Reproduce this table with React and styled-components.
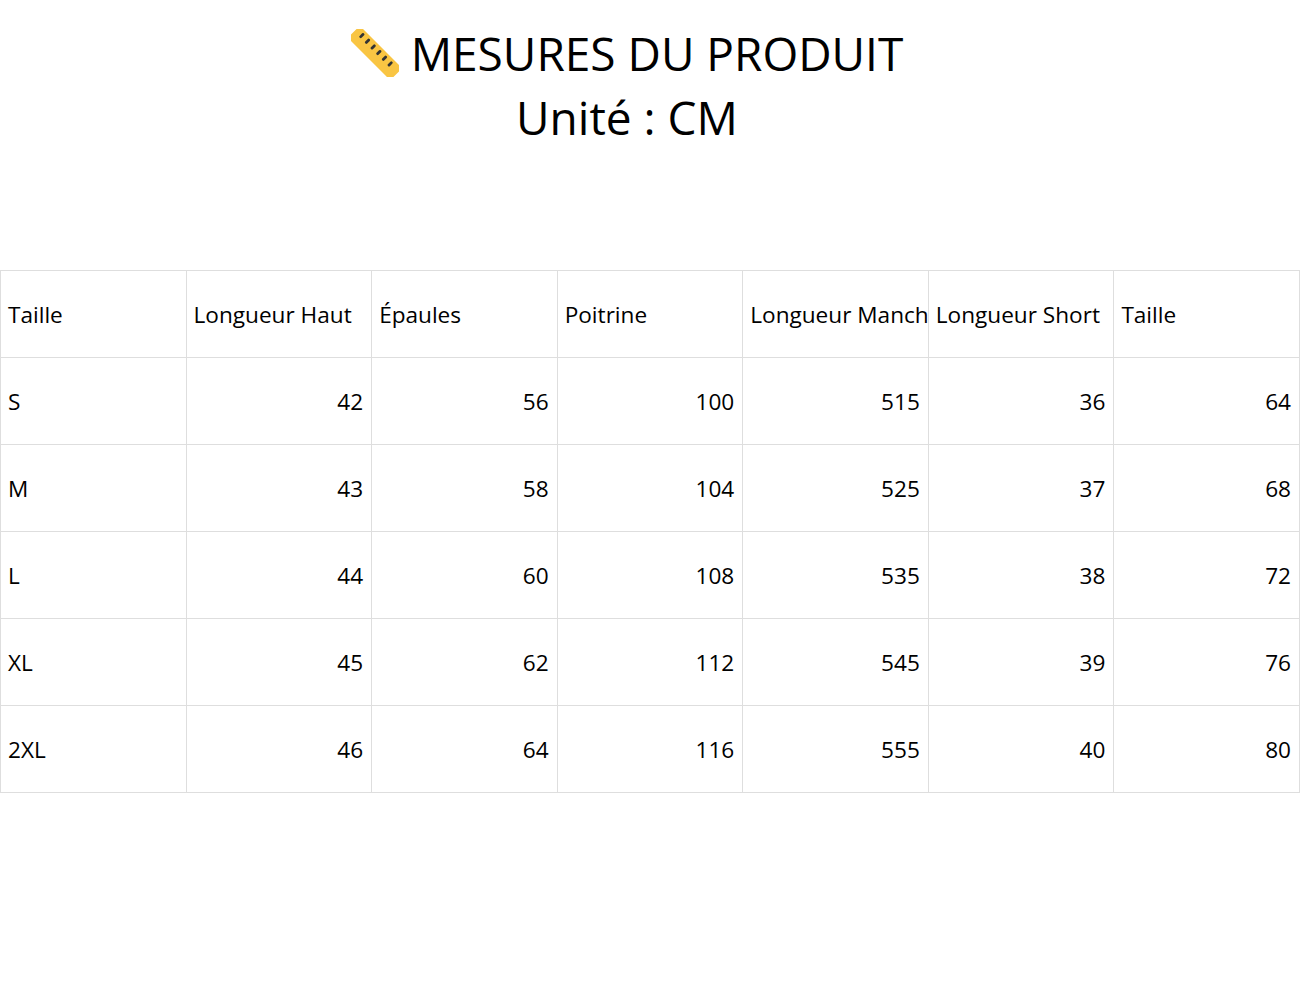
import styled, { createGlobalStyle } from "styled-components";

const GlobalStyle = createGlobalStyle`
  body {
    margin: 0;
    background: #fff;
    font-family: "Open Sans", "Liberation Sans", sans-serif;
    color: #000;
  }
`;

const Page = styled.div`
  width: 1300px;
`;

const Header = styled.header`
  padding: 21px 46px 0 0;
  height: 270px;
  box-sizing: border-box;
  text-align: center;
`;

const TitleLine = styled.div`
  font-size: 46px;
  line-height: 64px;
  display: flex;
  justify-content: center;
  align-items: center;
  gap: 12px;
`;

const Table = styled.table`
  width: 100%;
  border-collapse: collapse;
  table-layout: fixed;
`;

const Cell = styled.td`
  border: 1px solid #dedede;
  height: 87px;
  box-sizing: border-box;
  padding: 0 8px 0 7px;
  font-size: 22.6px;
  white-space: nowrap;
  overflow: hidden;
  text-align: ${(p) => (p.$num ? "right" : "left")};
`;

const headers = [
  "Taille",
  "Longueur Haut",
  "Épaules",
  "Poitrine",
  "Longueur Manche",
  "Longueur Short",
  "Taille",
];

const rows = [
  ["S", 42, 56, 100, 515, 36, 64],
  ["M", 43, 58, 104, 525, 37, 68],
  ["L", 44, 60, 108, 535, 38, 72],
  ["XL", 45, 62, 112, 545, 39, 76],
  ["2XL", 46, 64, 116, 555, 40, 80],
];

function RulerIcon() {
  return (
    <svg width="48" height="48" viewBox="0 0 48 48">
      <g transform="rotate(-45 24 24)">
        <rect x="15.5" y="-6" width="17" height="60" rx="4" fill="#f9c543" />
        {[1, 9, 17, 25, 33, 41].map((y) => (
          <rect
            key={y}
            x="24"
            y={y}
            width="6"
            height="2.8"
            rx="1.2"
            fill="#333"
          />
        ))}
      </g>
    </svg>
  );
}

export default function App() {
  return (
    <Page>
      <GlobalStyle />
      <Header>
        <TitleLine>
          <RulerIcon />
          MESURES DU PRODUIT
        </TitleLine>
        <TitleLine>Unité : CM</TitleLine>
      </Header>
      <Table>
        <tbody>
          <tr>
            {headers.map((h, i) => (
              <Cell key={i}>{h}</Cell>
            ))}
          </tr>
          {rows.map((r) => (
            <tr key={r[0]}>
              {r.map((v, i) => (
                <Cell key={i} $num={i > 0}>
                  {v}
                </Cell>
              ))}
            </tr>
          ))}
        </tbody>
      </Table>
    </Page>
  );
}
